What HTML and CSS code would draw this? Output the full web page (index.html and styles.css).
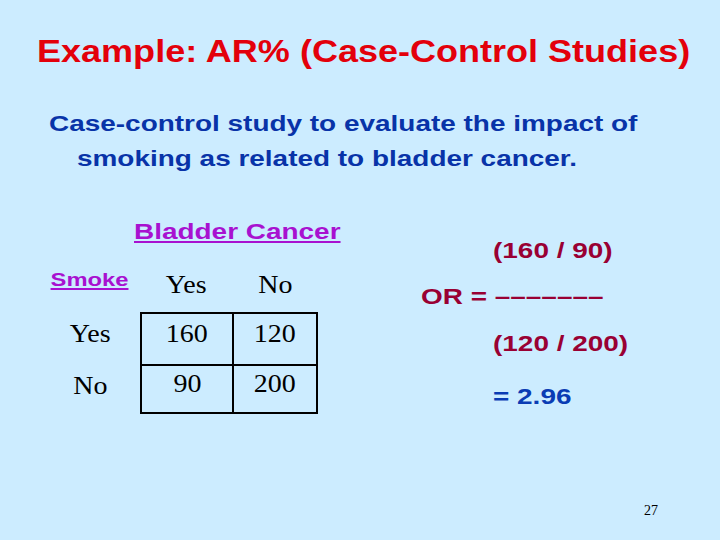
FILE: index.html
```html
<!DOCTYPE html>
<html lang="en">
<head>
<meta charset="utf-8">
<title>Example: AR% (Case-Control Studies)</title>
<link rel="stylesheet" href="styles.css">
</head>
<body>
<div class="slide">
  <h1 class="title"><span class="wide-t">Example: AR% (Case-Control Studies)</span></h1>
  <p class="lead"><span class="wide-s">Case-control study to evaluate the impact of<br>smoking as related to bladder cancer.</span></p>
  <div class="content">
    <div class="left">
      <div class="disease"><span class="wide-s">Bladder Cancer</span></div>
      <div class="table">
        <div class="label head-row smoke"><span class="wide-sm">Smoke</span></div>
        <div class="head head-row"><span class="wide-r">Yes</span></div>
        <div class="head head-row"><span class="wide-r">No</span></div>
        <div class="label row1"><span class="wide-r">Yes</span></div>
        <div class="cell c1 r1"><span class="wide-r">160</span></div>
        <div class="cell c2 r1"><span class="wide-r">120</span></div>
        <div class="label row2"><span class="wide-r">No</span></div>
        <div class="cell c1 r2"><span class="wide-r">90</span></div>
        <div class="cell c2 r2"><span class="wide-r">200</span></div>
      </div>
    </div>
    <div class="right">
      <div class="frac f1 num"><span class="wide-s">(160 / 90)</span></div>
      <div class="frac f2"><span class="wide-s">OR = –––––––</span></div>
      <div class="frac f3 num"><span class="wide-s">(120 / 200)</span></div>
      <div class="frac f4 num result"><span class="wide-s">= 2.96</span></div>
    </div>
  </div>
  <div class="page">27</div>
</div>
</body>
</html>
```
FILE: styles.css
```css
html, body {
  margin: 0;
  padding: 0;
  background: #ccecff;
}
.slide {
  width: 720px;
  height: 540px;
  box-sizing: border-box;
  padding-top: 32px;
  display: flex;
  flex-direction: column;
  font-family: "Liberation Sans", Arial, sans-serif;
  background: #ccecff;
  overflow: hidden;
}
.wide-t, .wide-s {
  display: inline-block;
  transform-origin: left center;
  white-space: nowrap;
}
.wide-t { transform: scaleX(1.162); }
.wide-s { transform: scaleX(1.27); }
.wide-sm, .wide-r {
  display: inline-block;
  transform-origin: center center;
}
.wide-sm { transform: scaleX(1.32); }
.wide-r { transform: scaleX(1.12); }

.title {
  margin: 0 0 0 37px;
  font-size: 31px;
  line-height: 40px;
  font-weight: bold;
  color: #e3000b;
  white-space: nowrap;
}
.lead {
  margin: 34px 0 0 49px;
  font-size: 22px;
  line-height: 35px;
  font-weight: bold;
  color: #0833a8;
}
.lead .wide-s {
  padding-left: 22px;
  text-indent: -22px;
}
.content {
  display: flex;
}
.left {
  width: 380px;
  padding-top: 42px;
  display: flex;
  flex-direction: column;
}
.disease {
  margin-left: 134px;
  font-size: 22px;
  line-height: 28px;
  font-weight: bold;
  color: #a811d0;
}
.disease .wide-s {
  text-decoration: underline;
  text-decoration-thickness: 2px;
  text-underline-offset: 2px;
}
.table {
  display: grid;
  grid-template-columns: 100px 92px 86px;
  grid-template-rows: 50px 52px 50px;
  margin: 16px 0 0 40px;
  font-family: "Liberation Serif", "Times New Roman", serif;
  font-size: 25px;
  line-height: 30px;
  color: #000;
}
.label, .head, .cell {
  text-align: center;
  box-sizing: border-box;
}
.head-row { padding-top: 8px; }
.row1 { padding-top: 7px; }
.row2 { padding-top: 7px; }
.smoke {
  padding-top: 3px;
  font-family: "Liberation Sans", Arial, sans-serif;
  font-size: 18px;
  font-weight: bold;
  color: #a811d0;
}
.smoke .wide-sm {
  text-decoration: underline;
  text-decoration-thickness: 2px;
  text-underline-offset: 2px;
}
.cell {
  border-color: #000;
  border-style: solid;
  border-width: 0;
}
.c1 { border-left-width: 2px; }
.c2 { border-left-width: 2px; border-right-width: 2px; }
.r1 { border-top-width: 2px; padding-top: 5px; }
.r2 { border-top-width: 2px; border-bottom-width: 2px; padding-top: 3px; }
.right {
  display: flex;
  flex-direction: column;
  padding-left: 41px;
  padding-top: 59px;
  font-weight: bold;
  font-size: 22px;
  line-height: 32px;
}
.frac { color: #990033; white-space: nowrap; }
.f2 { margin-top: 14px; }
.f3 { margin-top: 15px; }
.f4 { margin-top: 21px; }
.num { padding-left: 72px; }
.result { color: #0a3cb4; }
.page {
  margin: auto 62px 21px auto;
  font-family: "Liberation Serif", "Times New Roman", serif;
  font-size: 14px;
  line-height: 16px;
  color: #000;
}
```
